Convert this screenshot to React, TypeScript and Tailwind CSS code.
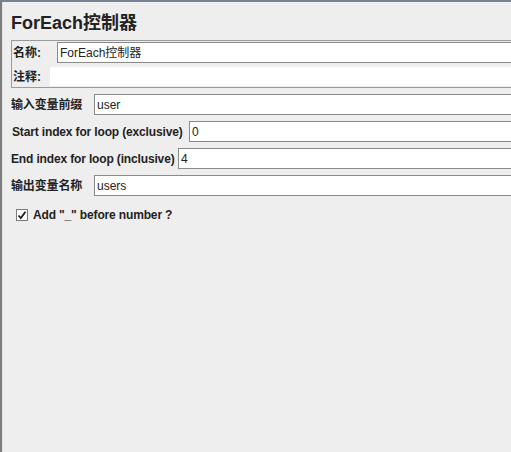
import React from 'react';

const font = { fontFamily: '"Liberation Sans", "Noto Sans CJK SC", sans-serif' };

interface FieldRowProps {
  label: string;
  value: string;
  labelWidth: string;
}

// one labelled text field, Swing style
const FieldRow: React.FC<FieldRowProps> = ({ label, value, labelWidth }) => (
  <div className="flex items-center h-[21px]">
    <div className={labelWidth + ' shrink-0 text-[12px] font-bold text-[#222] whitespace-nowrap tracking-[-0.15px]'}>{label}</div>
    <div className="flex-1 h-[21px] -mr-6 bg-white border border-[#8a8a8a] flex items-center pl-[2px] text-[12px] text-[#222]">
      {value}
    </div>
  </div>
);

export default function App() {
  return (
    <div
      className="w-[511px] h-[452px] overflow-hidden bg-[#eeeeee] border-t-2 border-t-[#7a8394] border-l-2 border-l-[#7d7d7d]"
      style={font}
    >
      <div className="h-full border-l border-l-[#e2e2e2] pl-[8px] pt-[10px]">
        {/* Title */}
        <div className="text-[18px] leading-[22px] font-bold text-[#222]">ForEach控制器</div>

        {/* Name / comment group */}
        <div className="mt-[6px] -mr-6 border border-[#9a9a9a] pt-[1px] pl-[1px] h-[48px]">
          <div className="flex items-center h-[21px]">
            <div className="w-[44px] shrink-0 text-[12px] font-bold text-[#222]">名称:</div>
            <div className="flex-1 h-[21px] bg-white border border-[#8a8a8a] flex items-center pl-[2px] text-[12px] text-[#222]">
              ForEach控制器
            </div>
          </div>
          <div className="flex items-center h-[19px] mt-[4px]">
            <div className="w-[37px] shrink-0 text-[12px] font-bold text-[#222]">注释:</div>
            <div className="flex-1 h-[19px] bg-white" />
          </div>
        </div>

        {/* Variable fields */}
        <div className="mt-[6px] flex flex-col gap-[6px]">
          <FieldRow label="输入变量前缀" value="user" labelWidth="w-[83px]" />
          <FieldRow label="Start index for loop (exclusive)" value="0" labelWidth="w-[178px] pl-[1px]" />
          <FieldRow label="End index for loop (inclusive)" value="4" labelWidth="w-[167px]" />
          <FieldRow label="输出变量名称" value="users" labelWidth="w-[83px]" />
        </div>

        {/* Checkbox */}
        <div className="mt-[10px] flex items-center pl-[5px] gap-[5px]">
          <div className="w-[12px] h-[12px] bg-white border border-[#7a7a7a] flex items-center justify-center">
            <svg width="10" height="10" viewBox="0 0 10 10">
              <path d="M1.5 5.5 L3.8 8 L8.5 1.8" fill="none" stroke="#1f1f1f" strokeWidth="1.8" />
            </svg>
          </div>
          <span className="text-[12px] font-bold text-[#222] tracking-[-0.15px]">Add "_" before number ?</span>
        </div>
      </div>
    </div>
  );
}
